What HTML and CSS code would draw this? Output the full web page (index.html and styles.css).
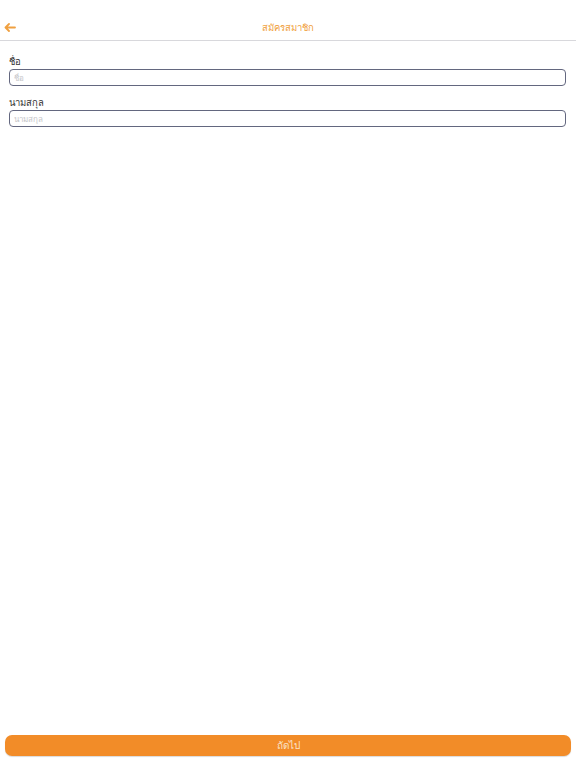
FILE: index.html
```html
<!DOCTYPE html>
<html lang="th">
<head>
<meta charset="utf-8">
<title>สมัครสมาชิก</title>
<link rel="stylesheet" href="styles.css">
</head>
<body>
<div class="page">
  <header class="topbar">
    <button class="back" aria-label="back">
      <svg width="12" height="9" viewBox="0 0 12 9"><path d="M11 4.5H2M5 1L1.5 4.5L5 8" fill="none" stroke="#f0a040" stroke-width="1.8" stroke-linecap="round" stroke-linejoin="round"/></svg>
    </button>
    <div class="title">สมัครสมาชิก</div>
  </header>
  <main class="form">
    <label class="field">
      <span class="label">ชื่อ</span>
      <input class="input" type="text" placeholder="ชื่อ">
    </label>
    <label class="field">
      <span class="label">นามสกุล</span>
      <input class="input" type="text" placeholder="นามสกุล">
    </label>
  </main>
  <footer class="bottom">
    <button class="next">ถัดไป</button>
  </footer>
</div>
</body>
</html>
```
FILE: styles.css
```css
* { box-sizing: border-box; }
html, body { margin: 0; padding: 0; height: 100%; background: #fff; }
body { font-family: "Noto Sans", "DejaVu Sans", sans-serif; }
.page { display: flex; flex-direction: column; height: 768px; }
.topbar {
  position: relative;
  height: 41px;
  border-bottom: 1.5px solid #d8d8dc;
  display: flex;
  align-items: flex-end;
  justify-content: center;
  padding-bottom: 6px;
}
.back {
  position: absolute;
  left: 4px;
  bottom: 8px;
  border: 0;
  background: none;
  padding: 0;
  display: flex;
}
.title { color: #f0a040; font-size: 9.5px; line-height: 12px; font-weight: 300; }
.field:first-child { margin-top: 1px; }
.form { flex: 1; padding: 14px 10px 0 9px; display: flex; flex-direction: column; gap: 11px; }
.field { display: flex; flex-direction: column; gap: 1px; }
.label { font-size: 9.5px; line-height: 12px; color: #333; }
.input {
  height: 17px;
  width: 100%;
  border: 1.6px solid #63677f;
  border-radius: 4px;
  padding: 0 4px;
  font-family: inherit;
  font-size: 8px;
  color: #333;
  outline: none;
}
.input::placeholder { color: #c4c4c8; }
.bottom { padding: 0 5px 12px 5px; }
.next {
  width: 100%;
  height: 21px;
  border: 0;
  border-radius: 7px;
  background: #f28c28;
  color: #fbe3c8;
  font-family: inherit;
  font-size: 10px;
  box-shadow: 0 1px 1px rgba(0,0,0,0.15);
}
```
